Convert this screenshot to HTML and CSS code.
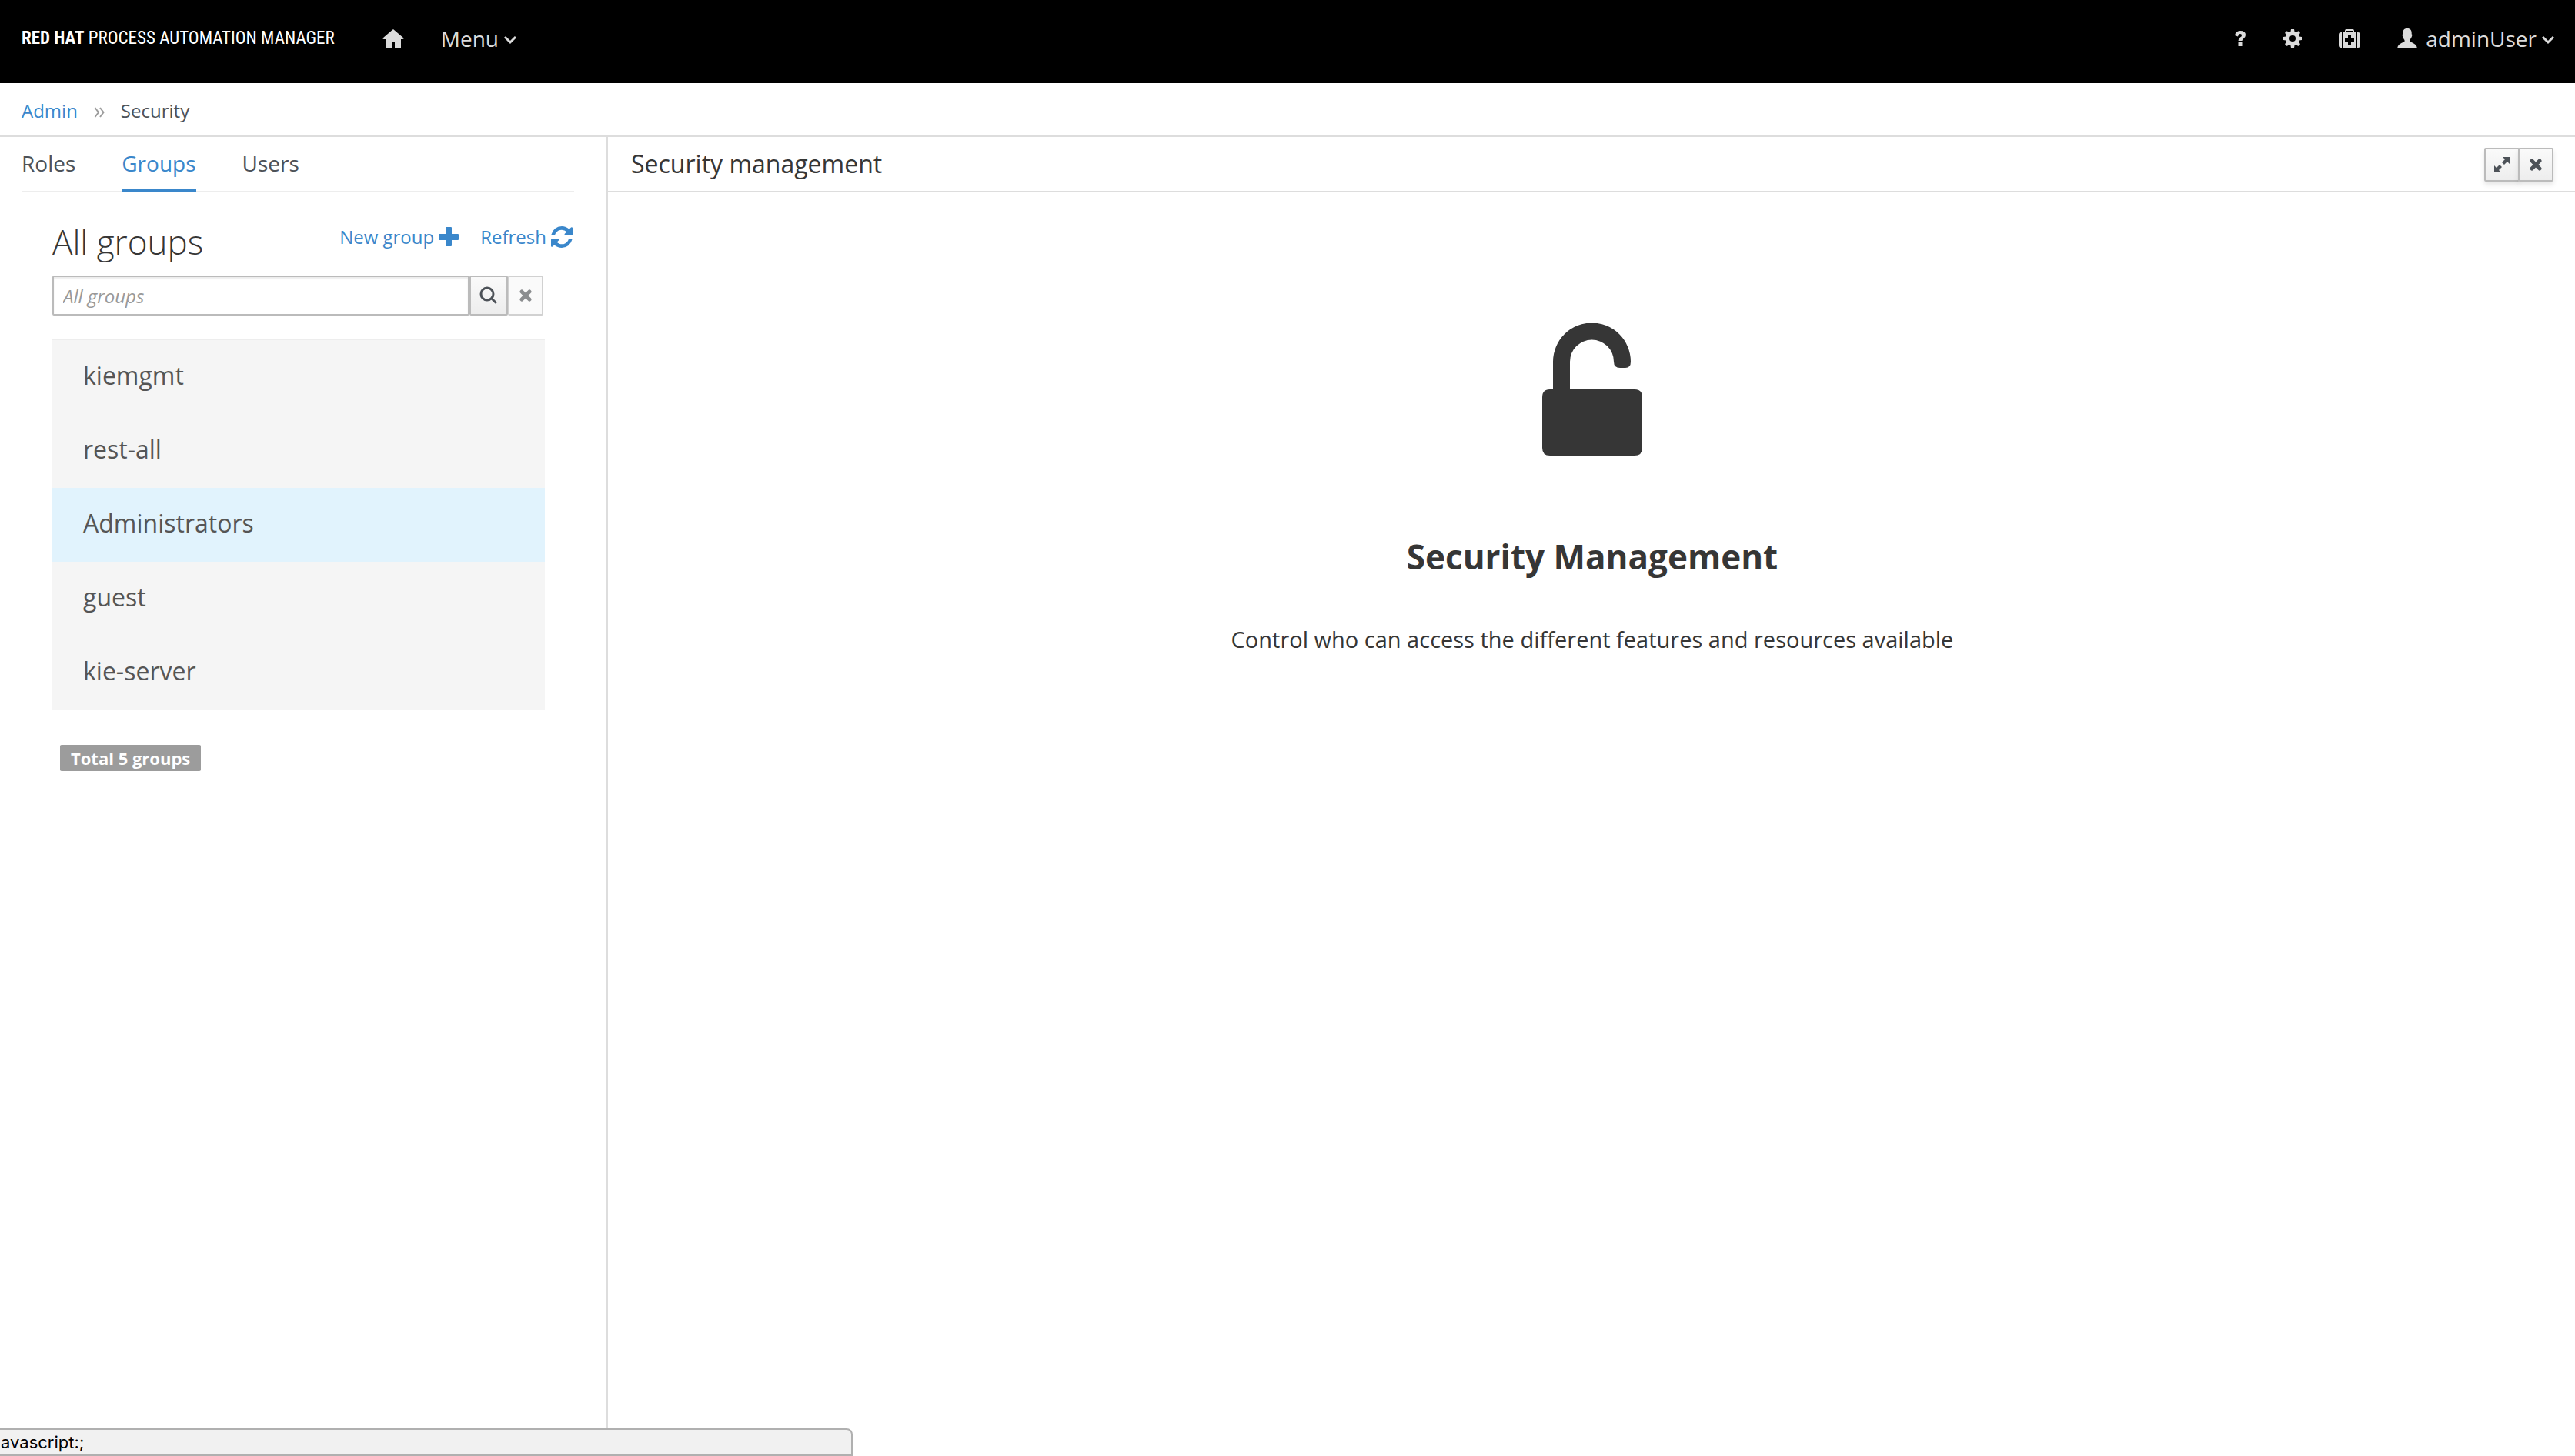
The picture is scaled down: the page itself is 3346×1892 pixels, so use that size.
FILE: index.html
```html
<!DOCTYPE html>
<html lang="en">
<head>
<meta charset="utf-8">
<title>Security management</title>
<link rel="stylesheet" href="styles.css">
</head>
<body>
<header class="masthead">
  <span class="brand"><b>RED HAT</b> PROCESS AUTOMATION MANAGER</span>
  <nav class="masthead-nav" aria-label="Main">
    <a class="home" href="#" aria-label="Home"><svg width="28" height="24" viewBox="0 0 28 24"><path d="M14 0L27.500 11.500Q28 13 26 13H24V24H16V16H12V24H4V13H2Q0 13 .5 11.500Z"/></svg></a>
    <button class="nav-button" type="button">Menu <svg class="caret" width="18" height="12" viewBox="0 0 18 12"><path d="M2 2L9 9L16 2"/></svg></button>
  </nav>
  <div class="utilities">
    <button class="nav-button help" type="button" aria-label="Help"><svg width="16" height="20" viewBox="0 0 16 20"><path d="M1 6Q2 0 8 0Q15 0 15 5.500Q15 8.500 12 10.500Q10.500 11.500 10.500 13H5.500Q5.500 10 8 8.500Q10 7.500 10 6Q10 4 8 4Q6 4 5 7.500ZM5.500 15H10.500V20H5.500Z"/></svg></button>
    <button class="nav-button settings" type="button" aria-label="Settings"><svg width="24" height="24" viewBox="0 0 24 24"><path fill-rule="evenodd" d="M10 0H14L14.600 3.500L16.500 4.300L19.400 2.200L22 4.800L19.900 7.600L20.700 9.400L24 10V14L20.700 14.600L19.900 16.500L22 19.300L19.300 22L16.500 19.900L14.600 20.700L14 24H10L9.400 20.700L7.500 19.900L4.700 22L2 19.300L4.100 16.500L3.300 14.600L0 14V10L3.300 9.400L4.100 7.600L2 4.800L4.700 2.200L7.500 4.200L9.400 3.500ZM12 8A4 4 0 1 0 12 16A4 4 0 1 0 12 8Z"/></svg></button>
    <button class="nav-button apps" type="button" aria-label="Apps"><svg width="28" height="24" viewBox="0 0 28 24"><path fill-rule="evenodd" d="M6 4H8V2Q8 0 10 0H18Q20 0 20 2V4H22V24H6ZM10 2V4H18V2ZM12 8V12H8V16H12V20H16V16H20V12H16V8ZM4 4V24H3Q0 24 0 21V7Q0 4 3 4ZM24 4H25Q28 4 28 7V21Q28 24 25 24H24Z"/></svg></button>
    <button class="nav-button" type="button"><svg class="user-icon" width="26" height="26" viewBox="0 0 26 26"><path d="M13 0C17.500 0 19 2.500 18.700 7.500Q20.200 7.500 18.500 11.500Q17 14 16.500 15V17Q26 20.500 26 26H0Q0 20.500 9.500 17V15Q8.500 14 7.500 11.500Q5.800 7.500 7.300 7.500C7 2.500 8.500 0 13 0Z"/></svg>adminUser <svg class="caret" width="18" height="12" viewBox="0 0 18 12"><path d="M2 2L9 9L16 2"/></svg></button>
  </div>
</header>
<nav class="breadcrumb" aria-label="Breadcrumb">
  <a href="#">Admin</a>
  <svg width="14" height="14" viewBox="0 0 14 14"><path d="M1.500 1L6 7L1.500 13M8 1L12.500 7L8 13"/></svg>
  <span>Security</span>
</nav>
<div class="workspace">
  <aside class="sidebar">
    <nav class="tabs" aria-label="Security sections">
      <a href="#">Roles</a><a class="active" href="#" aria-current="page">Groups</a><a href="#">Users</a>
    </nav>
    <section class="groups">
      <div class="groups-head">
        <h1>All groups</h1>
        <div class="actions">
          <a href="#">New group<svg width="26" height="26" viewBox="0 0 26 26"><path d="M10 0H16Q17 0 17 1V9H25Q26 9 26 10V16Q26 17 25 17H17V24Q17 25 16 25H10Q9 25 9 24V17H1Q0 17 0 16V10Q0 9 1 9H9V1Q9 0 10 0Z"/></svg></a>
          <a href="#">Refresh<svg width="28" height="28" viewBox="0 0 1536 1536"><path d="M1511 928q0 5-1 7-64 268-268 434.500T764 1536q-146 0-282.500-55T238 1324l-129 129q-19 19-45 19t-45-19-19-45V960q0-26 19-45t45-19h448q26 0 45 19t19 45-19 45l-137 137q71 66 161 102t187 36q134 0 250-65t186-179q11-17 53-117 8-23 30-23h192q13 0 22.500 9.500t9.500 22.500zm25-800v448q0 26-19 45t-45 19h-448q-26 0-45-19t-19-45 19-45l138-138Q969 256 768 256q-134 0-250 65T332 500q-11 17-53 117-8 23-30 23H50q-13 0-22.500-9.500T18 608v-7q65-268 270-434.500T768 0q146 0 284 55.500T1297 212l130-129q19-19 45-19t45 19 19 45z"/></svg></a>
        </div>
      </div>
      <form class="search">
        <input type="text" placeholder="All groups" aria-label="Search groups">
        <button class="tool" type="button" aria-label="Search"><svg width="24" height="24" viewBox="0 0 24 24"><circle cx="10" cy="10" r="8"/><path d="M16 16L21 21"/></svg></button>
        <button class="tool clear" type="button" aria-label="Clear" disabled><svg class="cross" width="16" height="16" viewBox="0 0 16 16"><path d="M3 3L13 13M13 3L3 13"/></svg></button>
      </form>
      <ul class="group-list">
        <li><a href="#">kiemgmt</a></li>
        <li><a href="#">rest-all</a></li>
        <li class="selected"><a href="#">Administrators</a></li>
        <li><a href="#">guest</a></li>
        <li><a href="#">kie-server</a></li>
      </ul>
      <span class="total">Total 5 groups</span>
    </section>
  </aside>
  <main class="content">
    <div class="panel-head">
      <h2>Security management</h2>
      <div class="panel-tools">
        <button class="tool" type="button" aria-label="Maximize"><svg class="expand" width="20" height="20" viewBox="0 0 20 20"><path d="M11 0H20V9L17 6L13 10L10 7L14 3ZM0 11L3 14L7 10L10 13L6 17L9 20H0Z"/></svg></button>
        <button class="tool" type="button" aria-label="Close"><svg class="cross" width="16" height="16" viewBox="0 0 16 16"><path d="M3 3L13 13M13 3L3 13"/></svg></button>
      </div>
    </div>
    <div class="blank-slate">
      <svg width="130" height="172" viewBox="0 0 130 172"><path d="M14 86V50A50 50 0 0 1 115 50V50Q115 58 108 58H101Q93 58 93 50A28 28 0 0 0 36 50V86H120Q130 86 130 96V162Q130 172 120 172H10Q0 172 0 162V96Q0 86 10 86Z"/></svg>
      <h3>Security Management</h3>
      <p>Control who can access the different features and resources available</p>
    </div>
  </main>
</div>
<div class="status" role="status">avascript:;</div>
</body>
</html>
```
FILE: styles.css
```css
* { box-sizing: border-box; }

body {
  margin: 0;
  min-height: 100vh;
  display: flex;
  flex-direction: column;
  background: #fff;
  color: #363636;
  font-family: "Open Sans", sans-serif;
  font-size: 24px;
  line-height: 40px;
}

a { color: #3a87cb; text-decoration: none; }
h1, h2, h3, p, ul { margin: 0; padding: 0; font-weight: 400; }
svg { display: block; flex: none; fill: currentColor; }
button { font: inherit; margin: 0; }

.masthead {
  height: 108px;
  padding: 0 26px 8px 28px;
  display: flex;
  align-items: center;
  background: #000;
  color: #dbdbdb;
}
.brand {
  font-family: "Roboto Condensed", "Open Sans Condensed", "Liberation Sans Narrow", sans-serif;
  font-size: 23px;
  color: #fff;
  white-space: nowrap;
}
.masthead-nav { display: flex; align-items: center; gap: 48px; margin-left: 62px; }
.masthead a { color: inherit; }
.nav-button {
  display: flex;
  align-items: center;
  gap: 6px;
  padding: 0;
  border: 0;
  background: none;
  color: inherit;
  font-size: 28px;
  line-height: 38px;
}
.caret { fill: none; stroke: currentColor; stroke-width: 3; margin-top: 4px; }
.utilities { display: flex; align-items: center; margin-left: auto; gap: 48px; }
.user-icon { margin-right: 5px; }

.breadcrumb {
  height: 70px;
  padding: 4px 28px 0;
  display: flex;
  align-items: center;
  gap: 21px;
  border-bottom: 2px solid #ddd;
}
.breadcrumb span { color: #4d5258; }
.breadcrumb svg { fill: none; stroke: #9c9c9c; stroke-width: 2; margin-top: 4px; }

.workspace { flex: 1; display: grid; grid-template-columns: 790px 1fr; }
.sidebar { padding: 0 42px 0 28px; border-right: 2px solid #ddd; }
.tabs {
  height: 72px;
  display: flex;
  gap: 60px;
  border-bottom: 2px solid #ededed;
  font-size: 28px;
}
.tabs a { height: 72px; padding-top: 14px; color: #4d5258; }
.tabs .active { color: #3a87cb; border-bottom: 4px solid #3a87cb; }

.groups { padding: 34px 0 0 40px; }
.groups-head { display: flex; justify-content: space-between; height: 74px; }
.groups-head h1 { font-size: 44px; font-weight: 300; line-height: 60px; }
.actions { display: flex; gap: 28px; padding: 4px 2px 0 0; }
.actions a { display: flex; align-items: center; gap: 6px; height: 40px; }

.search { display: flex; width: 638px; height: 52px; }
.search input {
  flex: 1;
  min-width: 0;
  padding: 0 12px;
  border: 2px solid #bbb;
  border-radius: 2px;
  box-shadow: inset 0 2px 2px rgba(3, 3, 3, .08);
  font: italic 24px "Open Sans", sans-serif;
}
.search input::placeholder { color: #999; opacity: 1; }
.tool {
  width: 50px;
  display: flex;
  align-items: center;
  justify-content: center;
  padding: 0;
  border: 2px solid #bbb;
  border-radius: 2px;
  background: linear-gradient(#fafafa, #ededed);
  color: #4d5258;
}
.search .tool svg:not(.cross) { fill: none; stroke: currentColor; stroke-width: 3; stroke-linecap: round; }
.cross { stroke: currentColor; stroke-width: 5; stroke-linecap: round; }
.search .clear { width: 46px; background: #fafafa; border-color: #d1d1d1; color: #8b8d8f; }

.group-list {
  width: 640px;
  margin-top: 30px;
  border-top: 2px solid #ededed;
  background: #f5f5f5;
  list-style: none;
  font-size: 32px;
}
.group-list a { display: block; height: 96px; padding: 26px 40px; color: #555; }
.group-list .selected { background: #e1f3fd; }
.total {
  display: inline-block;
  margin: 46px 0 0 10px;
  padding: 0 14px;
  border-radius: 2px;
  background: #9c9c9c;
  color: #fff;
  font-size: 22px;
  font-weight: 700;
  line-height: 34px;
}

.panel-head {
  height: 72px;
  padding: 0 28px 0 30px;
  display: flex;
  align-items: center;
  justify-content: space-between;
  border-bottom: 2px solid #ddd;
}
.panel-head h2 { font-size: 32px; }
.panel-tools { display: flex; padding-top: 2px; }
.panel-tools .tool { width: 46px; height: 44px; box-shadow: 0 4px 6px rgba(3, 3, 3, .1); }
.panel-tools .tool + .tool { margin-left: -2px; }

.blank-slate {
  padding: 170px 0 0 2px;
  display: flex;
  flex-direction: column;
  align-items: center;
  color: #363636;
}
.blank-slate h3 { margin-top: 101px; font-size: 44px; font-weight: 700; line-height: 60px; }
.blank-slate p { margin-top: 58px; font-size: 29px; }

.status {
  position: fixed;
  left: 0;
  bottom: 0;
  width: 1108px;
  height: 36px;
  padding-left: 1px;
  border: 2px solid #b0b0b0;
  border-left: 0;
  border-top-right-radius: 8px;
  background: #f1f1f1;
  color: #000;
  font: 22px/32px Inter, sans-serif;
}
```
